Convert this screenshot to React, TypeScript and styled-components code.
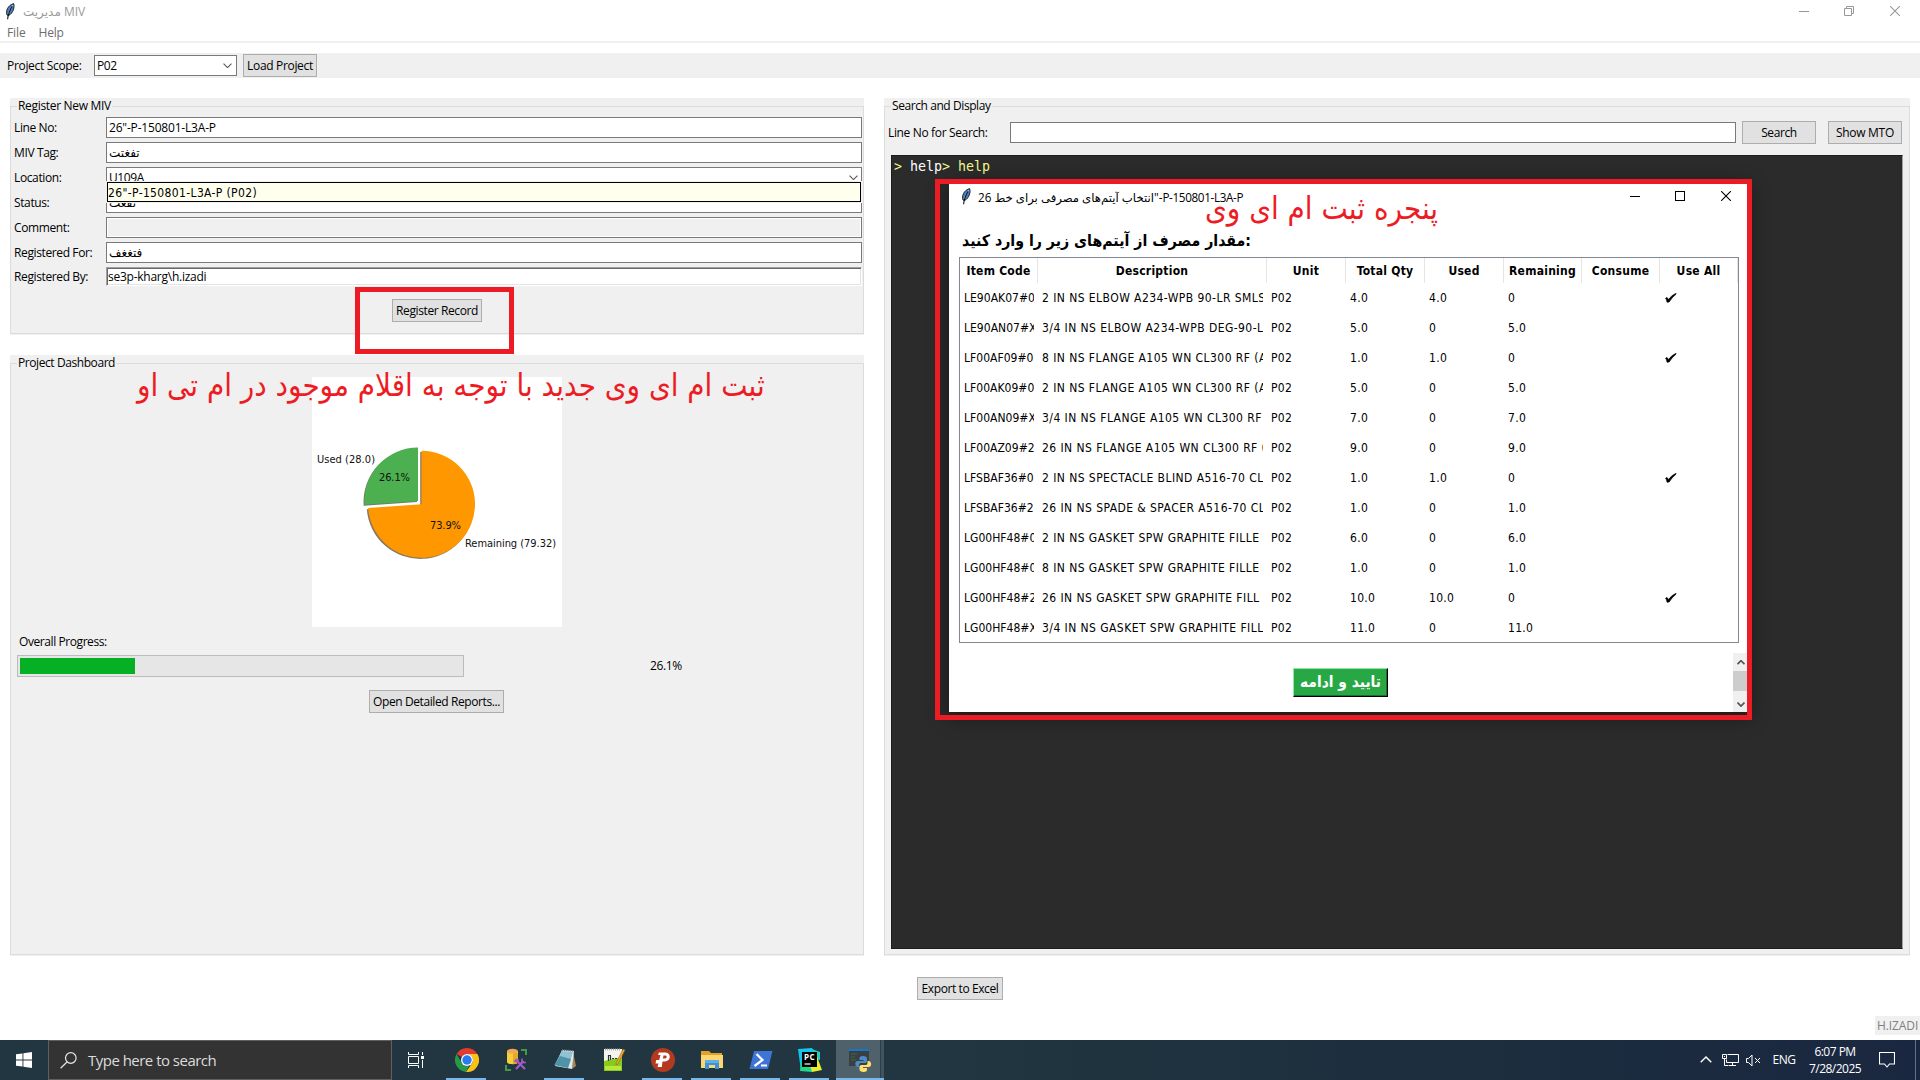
import React from "react";
import styled, { createGlobalStyle, css } from "styled-components";

const UI = '"Open Sans", "DejaVu Sans", sans-serif';
const TAHOMA = '"DejaVu Sans Condensed", "DejaVu Sans", sans-serif';
const RED = "#ed1c24";
const FACE = "#f0f0f0";

const Global = createGlobalStyle`
  *, *::before, *::after { box-sizing: border-box; }
  html, body { margin: 0; padding: 0; background: #fff; }
  body { overflow: hidden; }
`;

const Screen = styled.div`
  position: relative;
  display: flex;
  flex-direction: column;
  width: 1920px;
  height: 1080px;
  overflow: hidden;
  background: #fff;
  color: #000;
  font: 12px/16px ${UI};
`;

const Text = styled.span<{ $ls?: number }>`
  letter-spacing: ${(p) => p.$ls ?? -0.4}px;
  white-space: pre;
`;

/* ---------- window chrome ---------- */

const TitleBar = styled.header`
  display: flex;
  align-items: center;
  height: 24px;
  padding: 0 20px 2px 4px;
  color: #999;
`;
const TitleText = styled.span<{ $gap: number; $size?: number }>`
  flex: 1;
  margin-left: ${(p) => p.$gap}px;
  padding-top: 1px;
  font-size: ${(p) => p.$size ?? 12}px;
  white-space: pre;
`;
const Controls = styled.div`
  display: flex;
  gap: 35px;
  svg:last-child { margin-left: 1px; }
`;
const MenuBar = styled.nav`
  display: flex;
  gap: 13px;
  height: 19px;
  padding: 1px 7px 0;
  border-bottom: 2px solid ${FACE};
  color: #6d6d6d;
`;
const ScopeBar = styled.div`
  display: flex;
  align-items: center;
  height: 25px;
  margin-top: 10px;
  padding-left: 7px;
  background: ${FACE};
`;
const ScopeLabel = styled.label`
  width: 87px;
  letter-spacing: -0.32px;
`;
const Combo = styled.div`
  display: flex;
  align-items: center;
  justify-content: space-between;
  width: 143px;
  height: 21px;
  margin-right: 6px;
  padding: 0 4px 0 2px;
  border: 1px solid #7a7a7a;
  background: #fff;
`;
const Button = styled.button<{ $w: number; $ls?: number }>`
  display: flex;
  align-items: center;
  justify-content: center;
  flex: none;
  width: ${(p) => p.$w}px;
  height: 23px;
  padding: 0;
  border: 1px solid #adadad;
  border-radius: 0;
  background: #e1e1e1;
  color: #000;
  font: 12px/16px ${UI};
  letter-spacing: ${(p) => p.$ls ?? -0.4}px;
  white-space: pre;
`;

/* ---------- frames ---------- */

const Body = styled.main`
  display: flex;
  gap: 20px;
  height: 858px;
  margin-top: 20px;
  padding: 0 10px;
`;
const LeftColumn = styled.div`
  display: flex;
  flex-direction: column;
  gap: 20px;
  width: 854px;
`;
const Frame = styled.section<{ $h: number; $w?: number }>`
  display: flex;
  flex-direction: column;
  width: ${(p) => (p.$w ? `${p.$w}px` : "auto")};
  height: ${(p) => p.$h}px;
  padding: 0 0 1px;
  background: ${FACE};
`;
const Legend = styled.h2<{ $ls: number }>`
  display: flex;
  align-items: center;
  height: 16px;
  margin: 0 0 -8px;
  font: 12px/16px ${UI};
  letter-spacing: ${(p) => p.$ls}px;
  white-space: pre;
  &::before { content: ""; width: 6px; margin-left: 1px; }
  span { padding: 0 1px; background: ${FACE}; z-index: 1; }
`;
const FrameBox = styled.div`
  display: flex;
  flex-direction: column;
  flex: 1;
  border: 1px solid #dcdcdc;
`;

/* ---------- register form ---------- */

const Form = styled.div`
  display: grid;
  grid-template-columns: 92px 1fr;
  row-gap: 4px;
  padding: 10px 1px 0 3px;
`;
const FieldLabel = styled.label`
  align-self: center;
  letter-spacing: -0.38px;
  white-space: pre;
`;
const Field = styled.div<{ $kind?: "disabled" | "sunken" }>`
  display: flex;
  align-items: center;
  justify-content: space-between;
  height: 21px;
  padding: 0 3px 0 2px;
  border: 1px solid #7a7a7a;
  background: #fff;
  white-space: pre;
  ${(p) => p.$kind === "disabled" && css`
    background: ${FACE};
    box-shadow: inset 0 0 0 1px #fff;
  `}
  ${(p) => p.$kind === "sunken" && css`
    height: 19px;
    padding: 0 0 0 1px;
    border-color: #a0a0a0 #fff #fff #a0a0a0;
    box-shadow: inset 1px 1px 0 #696969, inset -1px -1px 0 #e3e3e3;
  `}
`;
const Centered = styled.div<{ $top: number; $shift?: number }>`
  display: flex;
  justify-content: center;
  margin-top: ${(p) => p.$top}px;
  padding-right: ${(p) => p.$shift ?? 0}px;
`;
const Suggestion = styled.div`
  position: absolute;
  left: 106px;
  top: 181px;
  width: 756px;
  height: 22px;
  padding: 1px 1px 0;
  border: 1px solid ${FACE};
  background: #ffffee;
  outline: 1px solid #000;
  outline-offset: -2px;
  font: 12px/20px ${TAHOMA};
  letter-spacing: 0.36px;
  white-space: pre;
`;

/* ---------- dashboard ---------- */

const ChartCard = styled.div`
  width: 250px;
  height: 250px;
  margin: 13px 0 0 301px;
  background: #fff;
  svg { display: block; }
`;
const ProgressLabel = styled.div`
  margin: 7px 0 5px 8px;
  letter-spacing: -0.42px;
`;
const ProgressRow = styled.div`
  display: flex;
  align-items: center;
  padding-left: 6px;
`;
const Track = styled.div`
  width: 447px;
  height: 22px;
  padding: 2px;
  border: 1px solid #bcbcbc;
  background: #e6e6e6;
`;
const Fill = styled.div`
  width: 26.1%;
  height: 16px;
  background: #06b025;
`;
const Percent = styled.span`
  margin-left: 186px;
  letter-spacing: -0.4px;
`;

/* ---------- search panel ---------- */

const SearchRow = styled.div`
  display: flex;
  align-items: center;
  height: 23px;
  margin: 14px 7px 11px 3px;
`;
const SearchLabel = styled.label`
  width: 122px;
  letter-spacing: -0.35px;
  white-space: pre;
`;
const SearchInput = styled.div`
  width: 726px;
  height: 21px;
  border: 1px solid #7a7a7a;
  background: #fff;
`;
const Gap = styled.div<{ $w: number }>`
  width: ${(p) => p.$w}px;
`;
const Terminal = styled.pre`
  flex: 1;
  margin: 0 6px 5px;
  padding: 2px 2px;
  border: 1px solid #1c1c1c;
  border-right-color: #a0a0a0;
  background: #2b2b2b;
  color: #fff;
  font: 13.3px/18px "DejaVu Sans Mono", monospace;
`;
const Prompt = styled.span`
  color: #f1fa8c;
`;
const ExportRow = styled.div`
  padding: 21px 0 0 917px;
`;
const Signature = styled.div`
  align-self: flex-end;
  width: 45px;
  height: 19px;
  margin-top: 16px;
  padding: 2px 0 0 2px;
  background: ${FACE};
  color: #808080;
`;

/* ---------- consumption dialog ---------- */

const Dialog = styled.div`
  position: absolute;
  left: 949px;
  top: 182px;
  width: 799px;
  height: 530px;
  display: flex;
  flex-direction: column;
  background: #fff;
  box-shadow: 0 4px 18px 2px rgba(0, 0, 0, 0.4);
`;
const DialogTitle = styled.div`
  display: flex;
  align-items: center;
  height: 28px;
  padding: 0 17px 0 11px;
`;
const Heading = styled.h3`
  margin: 19px 0 0 13px;
  height: 28px;
  font: bold 15.75px/23px ${TAHOMA};
  white-space: pre;
`;
const Table = styled.div`
  width: 780px;
  height: 386px;
  margin-left: 10px;
  border: 1px solid #828790;
  font: 12px/16px ${TAHOMA};
`;
const HeadRow = styled.div`
  display: grid;
  grid-template-columns: 78px 229px 79px 79px 79px 78px 78px 1fr;
  height: 25px;
  font-weight: bold;
  letter-spacing: 0.25px;
`;
const HeadCell = styled.div`
  padding-top: 5px;
  border-right: 1px solid #e5e5e5;
  text-align: center;
  white-space: nowrap;
  overflow: hidden;
`;
const Row = styled.div`
  display: grid;
  grid-template-columns: 78px 229px 79px 79px 79px 78px 78px 1fr;
  height: 30px;
  align-items: center;
`;
const Cell = styled.div<{ $ls?: number }>`
  margin: 0 4px;
  overflow: hidden;
  letter-spacing: ${(p) => p.$ls ?? 0.3}px;
  white-space: pre;
  svg { display: block; margin-left: 1px; }
`;
const DialogFoot = styled.div`
  display: flex;
  justify-content: space-between;
  flex: 1;
  padding: 10px 0 0 344px;
`;
const Confirm = styled.button`
  width: 95px;
  height: 29px;
  margin-top: 15px;
  padding: 0 0 2px;
  border: 1px solid;
  border-color: #93e6a7 #000 #000 #93e6a7;
  border-radius: 0;
  background: #28a745;
  box-shadow: inset -1px -1px 0 #1b6f2e;
  color: #fff;
  font: bold 15.4px/22px ${TAHOMA};
  white-space: pre;
`;
const Scroll = styled.div`
  display: flex;
  flex-direction: column;
  align-items: center;
  justify-content: space-between;
  width: 15px;
  padding: 7px 0 5px;
  background: ${FACE};
`;
const Thumb = styled.div`
  width: 15px;
  height: 20px;
  margin: 5px 0 11px;
  background: #cdcdcd;
`;

/* ---------- red notes drawn over the windows ---------- */

const Marker = styled.div<{ $x: number; $y: number; $w: number; $h: number }>`
  position: absolute;
  left: ${(p) => p.$x}px;
  top: ${(p) => p.$y}px;
  width: ${(p) => p.$w}px;
  height: ${(p) => p.$h}px;
  border: 5px solid ${RED};
`;
const Note = styled.div<{ $x: number; $y: number }>`
  position: absolute;
  left: ${(p) => p.$x}px;
  top: ${(p) => p.$y}px;
  color: ${RED};
  font: 31px/40px ${TAHOMA};
  white-space: pre;
`;

/* ---------- taskbar ---------- */

const Taskbar = styled.footer`
  position: absolute;
  left: 0;
  bottom: 0;
  display: flex;
  width: 1920px;
  height: 40px;
  background: linear-gradient(90deg, #213640 0%, #213640 48%, #1d2f3e 72%, #1a2740 100%);
  color: #fff;
`;
const Start = styled.div`
  display: flex;
  align-items: center;
  justify-content: center;
  width: 48px;
`;
const SearchBox = styled.div`
  display: flex;
  align-items: center;
  gap: 11px;
  width: 344px;
  padding-left: 11px;
  border: 1px solid #606060;
  background: #333;
  color: #dcdcdc;
  font-size: 15px;
  letter-spacing: -0.52px;
  line-height: 20px;
`;
const TaskView = styled.div`
  display: flex;
  align-items: center;
  justify-content: center;
  width: 48px;
  margin-right: 2px;
`;
const TaskButton = styled.div<{ $state?: "open" | "active" }>`
  display: flex;
  align-items: center;
  justify-content: center;
  width: 49px;
  ${(p) => p.$state === "open" && css`
    background: linear-gradient(#76b9ed, #76b9ed) 4px 38px / 40px 2px no-repeat;
  `}
  ${(p) => p.$state === "active" && css`
    width: 48px;
    margin-left: 2px;
    background:
      linear-gradient(#76b9ed, #76b9ed) 0 38px / 100% 2px no-repeat,
      linear-gradient(90deg, #4f616b 0, #4f616b 44px, #2b3e47 44px, #2b3e47 45px, #405460 45px);
  `}
`;
const Tray = styled.div`
  display: flex;
  align-items: center;
  flex: 1;
  justify-content: flex-end;
`;
const Lang = styled.span`
  width: 24px;
  margin: 0 12px 0 11px;
  letter-spacing: -0.4px;
  text-align: center;
`;
const Clock = styled.div`
  width: 54px;
  margin: 0 17px 0 0;
  text-align: center;
  line-height: 17.5px;
  letter-spacing: -0.52px;
  white-space: nowrap;
`;
const ShowDesktop = styled.div`
  width: 5px;
  height: 40px;
  margin-left: 20px;
  border-left: 1px solid #66708a;
`;

/* ---------- drawings ---------- */

const Feather = () => (
  <svg width="12" height="17" viewBox="0 0 12 17">
    <path d="M3 12C1.6 8 3.6 2.5 9.6 0.6c1.2 3-0.2 9.6-5 11.9z" fill="#4a7fc1" stroke="#16202c" strokeWidth="1" />
    <path d="M9 2C6.5 5 5 8 4.2 11.2" stroke="#a9cdf3" strokeWidth="1.1" fill="none" />
    <path d="M8.2 3.2C5.6 7 4.2 11 3.6 16.2" stroke="#111" strokeWidth="1.1" fill="none" />
  </svg>
);
const Min = ({ c }: { c: string }) => (
  <svg width="10" height="10"><path d="M0 5.5h10" stroke={c} /></svg>
);
const Max = ({ c }: { c: string }) => (
  <svg width="10" height="10"><rect x=".5" y=".5" width="9" height="9" fill="none" stroke={c} /></svg>
);
const Restore = ({ c }: { c: string }) => (
  <svg width="10" height="10"><path d="M.5 2.5h7v7h-7zM2.5 2.5v-2h7v7h-2" fill="none" stroke={c} /></svg>
);
const Close = ({ c }: { c: string }) => (
  <svg width="10" height="10"><path d="M0 0l10 10M10 0L0 10" stroke={c} strokeWidth="1.1" /></svg>
);
const Chevron = ({ up, w = 9, s = 1.2, c = "#555" }: { up?: boolean; w?: number; s?: number; c?: string }) => (
  <svg width={w} height={w * 0.6} viewBox="0 0 10 6">
    <path d={up ? "M.6 5.3L5 .9l4.4 4.4" : "M.6.7L5 5.1 9.4.7"} fill="none" stroke={c} strokeWidth={s} />
  </svg>
);
const Tick = () => (
  <svg width="12" height="10" viewBox="0 0 12 10">
    <path
      d="M0.6 5.2C1.4 4.3 2.4 4.4 2.9 5.8L3.3 6.8C5.4 3.9 8.2 1.4 11 0.5L11.2 1C8.4 3.2 6 6 4.1 9L2 9.2C1.8 7.6 1.5 6.2 0.6 5.2z"
      fill="#000"
      stroke="#000"
      strokeWidth=".7"
    />
  </svg>
);

const Pie = () => {
  const end = (cx: number, cy: number, r: number) => `${cx - r * 0.9975} ${cy + r * 0.0698}`;
  const rest = (cx: number, cy: number) =>
    `M${cx} ${cy}L${end(cx, cy, 53.5)}A53.5 53.5 0 1 0 ${cx} ${cy - 53.5}z`;
  const used = (cx: number, cy: number) =>
    `M${cx} ${cy}L${cx} ${cy - 53.5}A53.5 53.5 0 0 0 ${end(cx, cy, 53.5)}z`;
  return (
    <svg width="250" height="250" fontFamily={TAHOMA} fontSize="11" fill="#111">
      <path d={used(105, 125)} fill="#6f7f66" />
      <path d={used(106, 124)} fill="#4caf50" />
      <path d={rest(108.2, 128.4)} fill="#8c7a5c" />
      <path d={rest(109.5, 127.2)} fill="#ff9800" />
      <text x="5" y="86" textLength="58">Used (28.0)</text>
      <text x="67" y="104" textLength="31">26.1%</text>
      <text x="118" y="152" textLength="31">73.9%</text>
      <text x="153" y="170" textLength="91">Remaining (79.32)</text>
    </svg>
  );
};

const WinLogo = () => (
  <svg width="16" height="16" fill="#fff">
    <path d="M0 2.3L6.5 1.4v6.2H0zM7.4 1.2L16 0v7.6H7.4zM0 8.4h6.5v6.2L0 13.7zM7.4 8.4H16V16l-8.6-1.2z" />
  </svg>
);
const Magnifier = () => (
  <svg width="17" height="17" fill="none" stroke="#e6e6e6" strokeWidth="1.2">
    <circle cx="10.8" cy="6" r="5.3" /><path d="M7 10L.6 16.3" />
  </svg>
);
const TaskViewIcon = () => (
  <svg width="16" height="16" fill="none" stroke="#fff">
    <path d="M.5 0v2.5h10V0M.5 16v-2.5h10V16M.5 4.5h10v7H.5zM14.5 0v3M14.5 8v8" />
    <path d="M13 4h3v3h-3z" fill="#fff" stroke="none" />
  </svg>
);
const Chrome = () => (
  <svg width="24" height="24" viewBox="0 0 24 24">
    <path d="M12 0a12 12 0 0 1 10.4 6H12a6 6 0 0 0-5.2 3L1.6 6A12 12 0 0 1 12 0z" fill="#e33b2e" />
    <path d="M1.6 6l5.2 9A6 6 0 0 0 14 17.7L11 24A12 12 0 0 1 1.6 6z" fill="#259b48" />
    <path d="M22.4 6A12 12 0 0 1 11 24l6.2-9A6 6 0 0 0 15 7l-3-1z" fill="#fbc116" />
    <circle cx="12" cy="12" r="6" fill="#fff" /><circle cx="12" cy="12" r="4.7" fill="#2a7af0" />
  </svg>
);
const SqlTools = () => (
  <svg width="24" height="24" viewBox="0 0 24 24">
    <path d="M3 3v11c0 3 11 3 11 0V3z" fill="#f5cf3c" /><path d="M9 5h5v9c0 1.5-2 2-5 2z" fill="#e3ac24" />
    <ellipse cx="8.5" cy="3.2" rx="5.5" ry="2.4" fill="#f3a65a" />
    <path d="M17 2h5v5M2 17v5h5" fill="none" stroke="#3f9b46" strokeWidth="2" />
    <path d="M12 21l7.5-8M13 13l8 8" stroke="#a35bc4" strokeWidth="2.2" />
    <path d="M9.5 13l3-2.5 3 1.5-3 3z" fill="#a35bc4" /><path d="M18 10.5v4h4" fill="none" stroke="#a35bc4" strokeWidth="1.6" />
  </svg>
);
const Notepad = () => (
  <svg width="24" height="24" viewBox="0 0 24 24">
    <path d="M20 4l3 14-4 3z" fill="#a8845a" /><path d="M9 2l12 1-2 18-17-3z" fill="#dfe9ec" />
    <path d="M9 3l11 1-5 16L1.5 17z" fill="#8fc3d3" /><path d="M7 8l11 3-3 9L1.5 17z" fill="#4f93a8" />
    <path d="M9 2l12 1" stroke="#777" strokeWidth="1.5" strokeDasharray="1 1" />
  </svg>
);
const NotepadPlus = () => (
  <svg width="24" height="24" viewBox="0 0 24 24">
    <path d="M2 1h18v22H2z" fill="#f5f5f0" /><path d="M2 13l18-4v14H2z" fill="#85cc1f" /><path d="M3 18h16v4H3z" fill="#b9e838" />
    <path d="M3 1.5h16" stroke="#aaa" strokeWidth="2" strokeDasharray="1 1" />
    <path d="M6.5 7v6M7 7.5h2M8.500 8v4M10 10.500h2M13 10.500h2" stroke="#333" strokeWidth="1.2" />
    <path d="M21 1l2 1-7 14-2 1 .3-2.5z" fill="#f0a52b" stroke="#8a5a14" strokeWidth=".5" />
  </svg>
);
const Psiphon = () => (
  <svg width="24" height="24" viewBox="0 0 24 24">
    <circle cx="12" cy="12" r="12" fill="#b33a20" />
    <path d="M8 4.5h6.5c6 0 5.5 9-.5 9h-2.5L10.800 19H6.500l1-3.500h-3L5.200 12h3L9.500 7H7z" fill="#fff" />
    <path d="M12.5 7.5h2c1.800 0 1.500 3-.6 3h-2z" fill="#b33a20" />
  </svg>
);
const Explorer = () => (
  <svg width="24" height="24" viewBox="0 0 24 24">
    <path d="M1 3h8l2 2h11v3H1z" fill="#e2a325" /><path d="M1 7h22v13H1z" fill="#fbd774" />
    <path d="M5 12h14v9h-4v-4H9v4H5z" fill="#3f92d6" /><path d="M5 12h14v3H5z" fill="#5eb1e8" />
  </svg>
);
const PowerShell = () => (
  <svg width="24" height="24" viewBox="0 0 24 24">
    <path d="M5 3h18.500L19 21H.5z" fill="#3e74d6" />
    <path d="M7.500 6l6 6-8 6M12 17.500h6" fill="none" stroke="#fff" strokeWidth="2.2" />
  </svg>
);
const PyCharm = () => (
  <svg width="24" height="24" viewBox="0 0 24 24">
    <path d="M0 1l14-1 4 6-9 12-6 5z" fill="#12c6ec" /><path d="M14 1l8 3v8l-6-1z" fill="#1fd0c0" />
    <path d="M18 6l6 16-10 2-8-4z" fill="#e9ee2d" /><path d="M3 14l10 6 1 4-12-1z" fill="#21d789" />
    <path d="M4 4h15v15H4z" fill="#000" />
    <text x="6" y="12.200" fill="#fff" fontFamily={UI} fontWeight="bold" fontSize="8" textLength="10.500">PC</text>
    <path d="M6.500 16h6" stroke="#fff" strokeWidth="1.2" />
  </svg>
);
const PythonConsole = () => (
  <svg width="24" height="24" viewBox="0 0 24 24">
    <path d="M1 2h20v16H1z" fill="#3a3f42" /><path d="M1 1h20v2H1z" fill="#1476cf" />
    <path d="M3 6h6M3 9h4M3 12h5" stroke="#3a6a3a" />
    <path d="M15 8c-3 0-3.500 1-3.500 2.500V12h4v1h-6c-3 0-3 6 .5 6h1v-2c0-1.500 1-2 2-2h4c1 0 2-.5 2-2v-2.500C19 9 17.500 8 15 8z" fill="#4b8bc9" />
    <path d="M15.500 24c3 0 3.500-1 3.500-2.500V20h-4v-1h6c3 0 3-6-.5-6h-1v2c0 1.500-1 2-2 2h-4c-1 0-2 .5-2 2v2.500c0 1.500 1.500 2.500 4 2.500z" fill="#ffe16a" />
  </svg>
);
const Network = () => (
  <svg width="17" height="14" fill="none" stroke="#fff">
    <path d="M5.5 1.500h11v8h-12v-3M10.500 9.500v3M7 12.500h7M.5 1.500h4v4h-4zM2.500 5.500v7h4" /><path d="M2 3.500h1" />
  </svg>
);
const Muted = () => (
  <svg width="15" height="13" fill="none" stroke="#fff">
    <path d="M.5 4.500h2l3.500-3.500v11L2.500 8.500h-2zM9 4l5 5M14 4L9 9" />
  </svg>
);
const Notifications = () => (
  <svg width="16" height="16" fill="none" stroke="#fff" strokeWidth="1.1">
    <path d="M.5.5h15v11.500H10.500L8 15l-2.500-3H.5z" />
  </svg>
);

/* ---------- data ---------- */

const HEADERS = ["Item Code", "Description", "Unit", "Total Qty", "Used", "Remaining", "Consume", "Use All"];
const ITEMS: [string, string, string, string, string][] = [
  ["LE90AK07#0", "2 IN NS ELBOW A234-WPB 90-LR SMLS", "4.0", "4.0", "0"],
  ["LE90AN07#X", "3/4 IN NS ELBOW A234-WPB DEG-90-L", "5.0", "0", "5.0"],
  ["LF00AF09#0", "8 IN NS FLANGE A105 WN CL300 RF (A", "1.0", "1.0", "0"],
  ["LF00AK09#0", "2 IN NS FLANGE A105 WN CL300 RF (A", "5.0", "0", "5.0"],
  ["LF00AN09#X", "3/4 IN NS FLANGE A105 WN CL300 RF", "7.0", "0", "7.0"],
  ["LF00AZ09#2", "26 IN NS FLANGE A105 WN CL300 RF (", "9.0", "0", "9.0"],
  ["LFSBAF36#0", "2 IN NS SPECTACLE BLIND A516-70 CL", "1.0", "1.0", "0"],
  ["LFSBAF36#2", "26 IN NS SPADE & SPACER A516-70 CL", "1.0", "0", "1.0"],
  ["LG00HF48#0", "2 IN NS GASKET SPW GRAPHITE FILLE", "6.0", "0", "6.0"],
  ["LG00HF48#0", "8 IN NS GASKET SPW GRAPHITE FILLE", "1.0", "0", "1.0"],
  ["LG00HF48#2", "26 IN NS GASKET SPW GRAPHITE FILL", "10.0", "10.0", "0"],
  ["LG00HF48#X", "3/4 IN NS GASKET SPW GRAPHITE FILL", "11.0", "0", "11.0"],
];

export default function App() {
  return (
    <Screen>
      <Global />
      <TitleBar>
        <Feather />
        <TitleText $gap={7}>مدیریت MIV</TitleText>
        <Controls><Min c="#999" /><Restore c="#999" /><Close c="#999" /></Controls>
      </TitleBar>
      <MenuBar><Text $ls={-0.1}>File</Text><Text $ls={-0.2}>Help</Text></MenuBar>
      <ScopeBar>
        <ScopeLabel>Project Scope:</ScopeLabel>
        <Combo><Text>P02</Text><Chevron /></Combo>
        <Button $w={74} $ls={-0.33}>Load Project</Button>
      </ScopeBar>

      <Body>
        <LeftColumn>
          <Frame $h={237}>
            <Legend $ls={-0.32}><span>Register New MIV</span></Legend>
            <FrameBox>
              <Form>
                <FieldLabel>Line No:</FieldLabel>
                <Field><Text $ls={-0.19}>26"-P-150801-L3A-P</Text></Field>
                <FieldLabel>MIV Tag:</FieldLabel>
                <Field><Text $ls={0}>تفغتت</Text></Field>
                <FieldLabel>Location:</FieldLabel>
                <Field><Text>U109A</Text><Chevron /></Field>
                <FieldLabel>Status:</FieldLabel>
                <Field><Text $ls={0}>تفغت</Text></Field>
                <FieldLabel>Comment:</FieldLabel>
                <Field $kind="disabled" />
                <FieldLabel>Registered For:</FieldLabel>
                <Field><Text $ls={0}>فتغغف</Text></Field>
                <FieldLabel>Registered By:</FieldLabel>
                <Field $kind="sunken"><Text $ls={-0.25}>se3p-kharg\h.izadi</Text></Field>
              </Form>
              <Centered $top={13}><Button $w={90}>Register Record</Button></Centered>
            </FrameBox>
          </Frame>
          <Frame $h={601}>
            <Legend $ls={-0.42}><span>Project Dashboard</span></Legend>
            <FrameBox>
              <ChartCard><Pie /></ChartCard>
              <ProgressLabel>Overall Progress:</ProgressLabel>
              <ProgressRow><Track><Fill /></Track><Percent>26.1%</Percent></ProgressRow>
              <Centered $top={13} $shift={1}><Button $w={135}>Open Detailed Reports...</Button></Centered>
            </FrameBox>
          </Frame>
        </LeftColumn>
        <Frame $h={858} $w={1026}>
          <Legend $ls={-0.42}><span>Search and Display</span></Legend>
          <FrameBox>
            <SearchRow>
              <SearchLabel>Line No for Search:</SearchLabel>
              <SearchInput />
              <Gap $w={6} />
              <Button $w={74}>Search</Button>
              <Gap $w={12} />
              <Button $w={74} $ls={-0.3}>Show MTO</Button>
            </SearchRow>
            <Terminal><Prompt>&gt; </Prompt>help<Prompt>&gt; help</Prompt></Terminal>
          </FrameBox>
        </Frame>
      </Body>

      <ExportRow><Button $w={86}>Export to Excel</Button></ExportRow>
      <Signature><Text $ls={-0.1}>H.IZADI</Text></Signature>

      <Suggestion>26"-P-150801-L3A-P (P02)</Suggestion>

      <Dialog>
        <DialogTitle>
          <Feather />
          <TitleText $gap={6} $size={11.7}>انتخاب آیتم‌های مصرفی برای خط 26<Text $ls={-0.35}>"-P-150801-L3A-P</Text></TitleText>
          <Controls><Min c="#000" /><Max c="#000" /><Close c="#000" /></Controls>
        </DialogTitle>
        <Heading>مقدار مصرف از آیتم‌های زیر را وارد کنید:</Heading>
        <Table>
          <HeadRow>{HEADERS.map((h) => <HeadCell key={h}>{h}</HeadCell>)}</HeadRow>
          {ITEMS.map(([code, desc, total, used, left]) => (
            <Row key={code + desc}>
              <Cell $ls={0.02}>{code}</Cell>
              <Cell $ls={0.44}>{desc}</Cell>
              <Cell>P02</Cell>
              <Cell>{total}</Cell>
              <Cell>{used}</Cell>
              <Cell>{left}</Cell>
              <Cell />
              <Cell>{left === "0" && <Tick />}</Cell>
            </Row>
          ))}
        </Table>
        <DialogFoot>
          <Confirm>تایید و ادامه</Confirm>
          <Scroll>
            <Chevron up w={8} s={2.2} />
            <Thumb />
            <Chevron w={8} s={2.2} />
          </Scroll>
        </DialogFoot>
      </Dialog>

      <Marker $x={355} $y={287} $w={159} $h={67} />
      <Marker $x={935} $y={179} $w={817} $h={541} />
      <Note $x={137} $y={365}>ثبت ام ای وی جدید با توجه به اقلام موجود در ام تی او</Note>
      <Note $x={1205} $y={188}>پنجره ثبت ام ای وی</Note>

      <Taskbar>
        <Start><WinLogo /></Start>
        <SearchBox><Magnifier />Type here to search</SearchBox>
        <TaskView><TaskViewIcon /></TaskView>
        <TaskButton $state="open"><Chrome /></TaskButton>
        <TaskButton><SqlTools /></TaskButton>
        <TaskButton $state="open"><Notepad /></TaskButton>
        <TaskButton><NotepadPlus /></TaskButton>
        <TaskButton $state="open"><Psiphon /></TaskButton>
        <TaskButton $state="open"><Explorer /></TaskButton>
        <TaskButton $state="open"><PowerShell /></TaskButton>
        <TaskButton $state="open"><PyCharm /></TaskButton>
        <TaskButton $state="active"><PythonConsole /></TaskButton>
        <Tray>
          <Chevron up w={12} s={1.2} c="#fff" />
          <Gap $w={10} />
          <Network />
          <Gap $w={7} />
          <Muted />
          <Lang>ENG</Lang>
          <Clock>6:07 PM<br />7/28/2025</Clock>
          <Notifications />
          <ShowDesktop />
        </Tray>
      </Taskbar>
    </Screen>
  );
}
